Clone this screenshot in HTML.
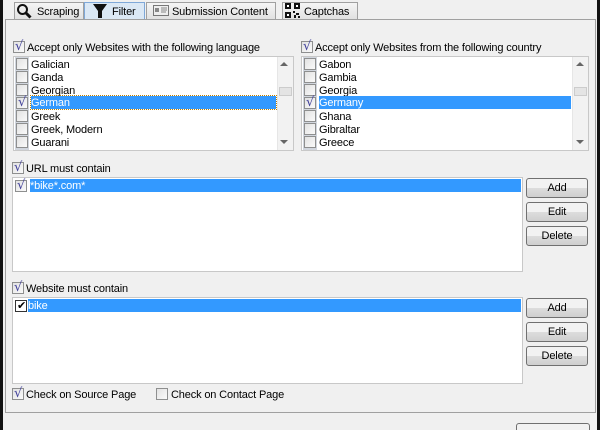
<!DOCTYPE html>
<html><head><style>
*{margin:0;padding:0;box-sizing:border-box}
html,body{width:600px;height:430px;overflow:hidden}
body{background:#f0f0f0;position:relative;font-family:"Liberation Sans",sans-serif;font-size:11px;letter-spacing:-0.15px;color:#000}
.a{position:absolute}
.tab{position:absolute;top:2px;height:18px;border:1px solid #a0a0a0;border-bottom:none;background:linear-gradient(#f5f5f5,#e0e0e0);padding:2px 4px 0 4px;line-height:15px;white-space:nowrap}
.box{position:absolute;background:#fff;border:1px solid #c8c8c8}
.cb{position:absolute;width:12px;height:12px;border:1px solid #8e8f8f;background:linear-gradient(135deg,#e2e2e2,#fafafa)}
.ck::after{content:"√";position:absolute;left:1px;top:-3px;font-size:13px;color:#40409a;font-family:"DejaVu Sans",sans-serif}
.lbl{position:absolute;white-space:nowrap;line-height:13px}
.row{position:absolute;height:13px;line-height:14px;white-space:nowrap}
.sel{background:#3399ff;color:#fff}
.btn{position:absolute;width:62px;height:20px;border:1px solid #707070;border-radius:3px;background:linear-gradient(#f2f2f2 50%,#dddddd 50%,#cfcfcf);text-align:center;line-height:19px}
.sb{position:absolute;background:#f2f2f2;border-left:1px solid #e6e6e6}
</style></head><body>
<div class="a" style="left:0;top:0;width:3px;height:430px;background:#111"></div>
<div class="a" style="left:597px;top:0;width:3px;height:430px;background:#111"></div>
<div class="tab" style="left:14px;width:70px;padding-left:22px">Scraping</div>
<svg class="a" style="left:16px;top:3px" width="16" height="16"><circle cx="6.5" cy="6.5" r="4.5" fill="none" stroke="#111" stroke-width="2"/><path d="M10 10l4.5 4.5" stroke="#111" stroke-width="3"/></svg>
<div class="tab" style="left:84px;width:61px;padding-left:27px;background:#dbe8f5;border-color:#7fa8d8">Filter</div>
<svg class="a" style="left:92px;top:3px" width="16" height="16"><path d="M1 1h14l-5 7v7h-4v-7z" fill="#111"/></svg>
<div class="tab" style="left:146px;width:130px;padding-left:25px">Submission Content</div>
<svg class="a" style="left:153px;top:5px" width="16" height="12"><rect x="0.5" y="0.5" width="15" height="10" fill="#eee" stroke="#777"/><rect x="2" y="3" width="4" height="4" fill="#888"/><path d="M8 3h6M8 5h6M8 7h5" stroke="#888"/></svg>
<div class="tab" style="left:282px;width:76px;padding-left:21px">Captchas</div>
<svg class="a" style="left:285px;top:3px" width="15" height="15"><path d="M0 0h6v6h-6zM9 0h6v6h-6zM0 9h6v6h-6z" fill="#111"/><path d="M2 2h2v2h-2zM11 2h2v2h-2zM2 11h2v2h-2z" fill="#fff"/><path d="M8 8h2v2h-2zM11 10h3v2h-3zM9 12h2v3h-2zM13 13h2v2h-2z" fill="#111"/></svg>
<div class="a" style="left:5px;top:19px;width:591px;height:394px;border:1px solid #a0a0a0;background:#f0f0f0"></div>

<div class="cb ck" style="left:13px;top:41px"></div><div class="lbl" style="left:27px;top:42px">Accept only Websites with the following language</div>
<div class="box" style="left:13px;top:56px;width:281px;height:95px"></div>
<div class="sb" style="left:277px;top:57px;width:16px;height:93px"></div>
<div class="a" style="left:279px;top:87px;width:13px;height:9px;background:#e4e4e4;border:1px solid #ccc"></div>
<div class="a" style="left:280px;top:62px;border:4px solid transparent;border-bottom:4px solid #666;border-top:none"></div>
<div class="a" style="left:280px;top:140px;border:4px solid transparent;border-top:4px solid #666;border-bottom:none"></div>
<div class="a" style="left:15px;top:57px;width:14px;height:93px;background:#7a8aa0;opacity:.35"></div>

<div class="cb" style="left:16px;top:58px"></div><div class="row" style="left:31px;top:58px">Galician</div>
<div class="cb" style="left:16px;top:71px"></div><div class="row" style="left:31px;top:71px">Ganda</div>
<div class="cb" style="left:16px;top:84px"></div><div class="row" style="left:31px;top:84px">Georgian</div>
<div class="cb ck" style="left:16px;top:97px"></div><div class="row sel" style="left:31px;top:96px;width:245px;height:13px;outline:1px dotted #c08000">German</div>
<div class="cb" style="left:16px;top:110px"></div><div class="row" style="left:31px;top:110px">Greek</div>
<div class="cb" style="left:16px;top:123px"></div><div class="row" style="left:31px;top:123px">Greek, Modern</div>
<div class="cb" style="left:16px;top:136px"></div><div class="row" style="left:31px;top:136px">Guarani</div>

<div class="cb ck" style="left:301px;top:41px"></div><div class="lbl" style="left:315px;top:42px">Accept only Websites from the following country</div>
<div class="box" style="left:301px;top:56px;width:288px;height:95px"></div>
<div class="sb" style="left:572px;top:57px;width:16px;height:93px"></div>
<div class="a" style="left:574px;top:87px;width:13px;height:9px;background:#e4e4e4;border:1px solid #ccc"></div>
<div class="a" style="left:576px;top:62px;border:4px solid transparent;border-bottom:4px solid #666;border-top:none"></div>
<div class="a" style="left:576px;top:140px;border:4px solid transparent;border-top:4px solid #666;border-bottom:none"></div>
<div class="a" style="left:303px;top:57px;width:14px;height:93px;background:#7a8aa0;opacity:.35"></div>
<div class="cb" style="left:304px;top:58px"></div><div class="row" style="left:319px;top:58px">Gabon</div>
<div class="cb" style="left:304px;top:71px"></div><div class="row" style="left:319px;top:71px">Gambia</div>
<div class="cb" style="left:304px;top:84px"></div><div class="row" style="left:319px;top:84px">Georgia</div>
<div class="cb ck" style="left:304px;top:97px"></div><div class="row sel" style="left:319px;top:96px;width:252px">Germany</div>
<div class="cb" style="left:304px;top:110px"></div><div class="row" style="left:319px;top:110px">Ghana</div>
<div class="cb" style="left:304px;top:123px"></div><div class="row" style="left:319px;top:123px">Gibraltar</div>
<div class="cb" style="left:304px;top:136px"></div><div class="row" style="left:319px;top:136px">Greece</div>

<div class="cb ck" style="left:12px;top:162px"></div><div class="lbl" style="left:26px;top:163px">URL must contain</div>
<div class="box" style="left:12px;top:177px;width:511px;height:95px"></div>
<div class="cb ck" style="left:15px;top:180px"></div><div class="row sel" style="left:30px;top:179px;width:491px">*bike*.com*</div>
<div class="btn" style="left:526px;top:178px">Add</div>
<div class="btn" style="left:526px;top:202px">Edit</div>
<div class="btn" style="left:526px;top:226px">Delete</div>

<div class="cb ck" style="left:12px;top:282px"></div><div class="lbl" style="left:26px;top:283px">Website must contain</div>
<div class="box" style="left:12px;top:297px;width:511px;height:87px"></div>
<div class="cb" style="left:15px;top:300px;background:#fff;border-color:#333"></div><div class="a" style="left:17px;top:299px;font-size:11px;font-weight:bold;font-family:'DejaVu Sans',sans-serif">✔</div>
<div class="row sel" style="left:28px;top:299px;width:493px">bike</div>
<div class="btn" style="left:526px;top:298px">Add</div>
<div class="btn" style="left:526px;top:322px">Edit</div>
<div class="btn" style="left:526px;top:346px">Delete</div>

<div class="cb ck" style="left:12px;top:388px"></div><div class="lbl" style="left:26px;top:389px">Check on Source Page</div>
<div class="cb" style="left:156px;top:388px"></div><div class="lbl" style="left:171px;top:389px">Check on Contact Page</div>

<div class="btn" style="left:516px;top:423px;width:74px;height:24px"></div>
</body></html>
